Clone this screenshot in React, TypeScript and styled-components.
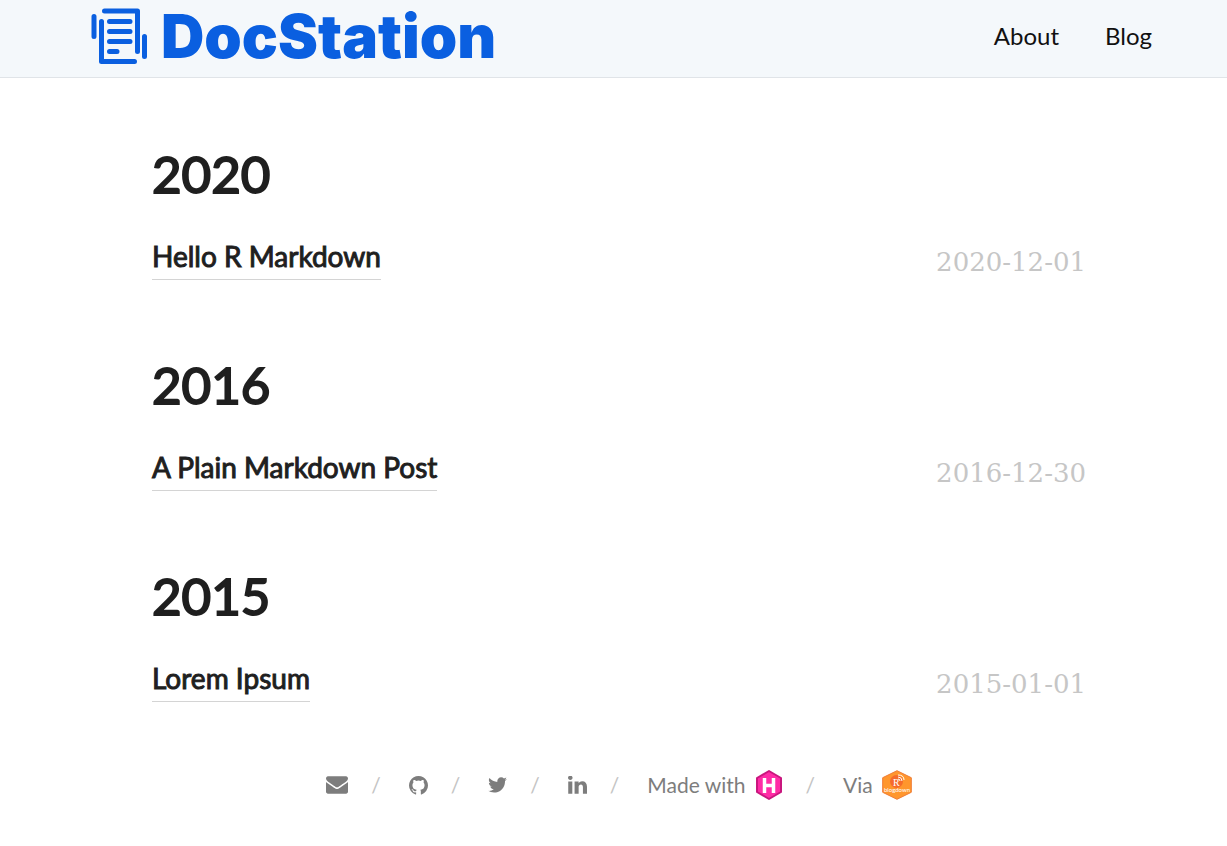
import React from 'react';
import styled, { createGlobalStyle } from 'styled-components';

const GlobalStyle = createGlobalStyle`
  body {
    margin: 0;
    background: #fff;
    color: #1f1f1f;
    font-family: Lato, sans-serif;
  }
`;

const Header = styled.header`
  display: flex;
  align-items: center;
  justify-content: space-between;
  height: 77px;
  padding: 0 75px 0 91px;
  background: #f4f8fb;
  border-bottom: 1px solid #e0e4e8;
`;

const Brand = styled.a`
  display: flex;
  align-items: center;
  gap: 14px;
  padding-bottom: 5px;
  color: #0a5fe0;
  font: 900 60px/72px Inter, sans-serif;
  text-decoration: none;
`;

const Nav = styled.nav`
  display: flex;
  gap: 46px;
  padding-bottom: 6px;
`;

const NavLink = styled.a`
  color: #111;
  font-size: 24px;
  line-height: 36px;
  text-decoration: none;
`;

const Main = styled.main`
  padding: 60px 141px 0 152px;
`;

const YearGroup = styled.section`
  padding-bottom: 69px;

  &:last-child {
    padding-bottom: 64px;
  }
`;

const Year = styled.h1`
  margin: 0 0 28px;
  font-size: 51px;
  font-weight: 400;
  line-height: 72px;
  -webkit-text-stroke: 2px currentColor;
`;

const Post = styled.article`
  display: flex;
  align-items: flex-start;
  justify-content: space-between;
`;

const PostTitle = styled.h2`
  margin: 0;
  font-size: 28px;
  font-weight: 400;
  line-height: 36px;
  -webkit-text-stroke: 1px currentColor;
`;

const PostLink = styled.a`
  display: block;
  padding-bottom: 5px;
  border-bottom: 1px solid #d4d4d4;
  color: inherit;
  text-decoration: none;
`;

const PostDate = styled.time`
  padding-top: 6px;
  color: #c6c6c6;
  font: 26px/36px "DejaVu Serif", serif;
`;

const FooterList = styled.ul`
  display: flex;
  align-items: center;
  justify-content: center;
  margin: 0;
  padding: 0 141px 40px 152px;
  list-style: none;
  font-size: 21px;
  line-height: 38px;
`;

const FooterItem = styled.li`
  display: flex;
  align-items: center;

  & + &::before {
    content: '/';
    margin: 0 28px 0 23px;
    color: #c4c4c4;
  }
`;

const FooterLink = styled.a`
  display: flex;
  align-items: center;
  gap: 9px;
  color: #7d7d7d;
  text-decoration: none;
`;

const Icon = styled.svg`
  display: block;
  fill: currentColor;
`;

const DocumentLogo = () => (
  <svg width="56" height="58" viewBox="0 0 56 58" fill="none" stroke="currentColor" strokeWidth="5" strokeLinecap="round" strokeLinejoin="round" aria-hidden="true">
    <path d="M3 9.500v20M53.500 29.500v20M13.500 4h33v40.500M10.500 14.500v40h33M18.500 14.500h20.500M18.500 24.500h20.500M18.500 34.500h20.500M18.500 44.500h7.500" />
  </svg>
);

const social = [
  {
    label: 'Email', width: 22, box: '0 128 1792 1664',
    path: 'M1792 710v794q0 66-47 113t-113 47h-1472q-66 0-113-47t-47-113v-794q44 49 101 87 362 246 497 345 57 42 92.5 65.5t94.5 48 110 24.5h2q51 0 110-24.5t94.5-48 92.5-65.5q170-123 498-345 57-39 100-87zm0-294q0 79-49 151t-122 123q-376 261-468 325-10 7-42.5 31t-54 38.5-52 32.5-57.5 27-50 9h-2q-23 0-50-9t-57.5-27-52-32.5-54-38.5-42.5-31q-91-64-262-182.5t-205-142.5q-62-42-117-115.5t-55-136.5q0-78 41.5-130t118.5-52h1472q65 0 112.5 47t47.5 113z',
  },
  {
    label: 'GitHub', width: 19, box: '128 128 1536 1536',
    path: 'M896 128q209 0 385.5 103t279.5 279.5 103 385.5q0 251-146.5 451.5t-378.5 277.5q-27 5-40-7t-13-30q0-3 .5-76.5t.5-134.5q0-97-52-142 57-6 102.5-18t94-39 81-66.5 53-105 20.5-150.5q0-119-79-206 37-91-8-204-28-9-81 11t-92 44l-38 24q-93-26-192-26t-192 26q-16-11-42.5-27t-83.5-38.5-85-13.5q-45 113-8 204-79 87-79 206 0 85 20.5 150t52.5 105 80.5 67 94 39 102.5 18q-39 36-49 103-21 10-45 15t-57 5-65.5-21.5-55.5-62.5q-19-32-48.5-52t-49.5-24l-20-3q-21 0-29 4.5t-5 11.5 9 14 13 12l7 5q22 10 43.5 38t31.5 51l10 23q13 38 44 61.5t67 30 69.5 7 55.5-3.5l23-4q0 38 .5 88.5t.5 54.5q0 18-13 30t-40 7q-232-77-378.5-277.5t-146.5-451.5q0-209 103-385.5t279.5-279.5 385.5-103z',
  },
  {
    label: 'Twitter', width: 19, box: '100 150 1590 1590',
    path: 'M1684 408q-67 98-162 167 1 14 1 42 0 130-38 259.5t-115.5 248.5-184.5 210.5-258 146-323 54.5q-271 0-496-145 35 4 78 4 225 0 401-138-105-2-188-64.5t-114-159.5q33 5 61 5 43 0 85-11-112-23-185.5-111.5t-73.5-205.5v-4q68 38 146 41-66-44-105-115t-39-154q0-88 44-163 121 149 294.5 238.5t371.5 99.5q-8-38-8-74 0-134 94.5-228.5t228.5-94.5q140 0 236 102 109-21 205-78-37 115-142 178 93-10 186-50z',
  },
  {
    label: 'LinkedIn', width: 19, box: '128 176 1536 1536',
    path: 'M477 625v991h-330v-991h330zm21-306q1 73-50.5 122t-135.5 49h-2q-82 0-132-49t-50-122q0-74 51.5-122.5t134.5-48.5 133 48.5 51 122.5zm1166 729v568h-329v-530q0-105-40.5-164.5t-126.5-59.5q-63 0-105.5 34.5t-63.5 85.5q-11 30-11 81v553h-329q2-399 2-647t-1-296l-1-48h329v144h-2q20-32 41-56t56.5-52 87-43.5 114.5-15.5q171 0 275 113.5t104 332.5z',
  },
];

const HugoLogo = () => (
  <svg width="28" height="30" viewBox="0 0 28 30" aria-label="Hugo">
    <path d="M14 1 26 8v14l-12 7L2 22V8z" fill="#ff2ba6" stroke="#c9177e" strokeWidth="2" strokeLinejoin="round" />
    <path d="M9.500 8v15M18.500 8v15M9.500 15.500h9" stroke="#fff" strokeWidth="3.5" fill="none" />
  </svg>
);

const BlogdownLogo = () => (
  <svg width="30" height="30" viewBox="0 0 30 30" aria-label="blogdown">
    <path d="M15 .7 29.300 7.700v14.600L15 29.300.7 22.300V7.700z" fill="#ff962d" stroke="#ef7b32" strokeWidth="1" />
    <circle cx="14.500" cy="11.500" r="6.500" fill="#f56b2b" />
    <text x="11" y="16" fill="#fff" fontFamily="Liberation Serif, serif" fontSize="10">R</text>
    <path d="M16 9q2 0 2 2M16 7q4 0 4 4M16 5q6 0 6 5" stroke="#fff" fill="none" />
    <text x="15" y="22" textAnchor="middle" fill="#fff" fontFamily="Lato, sans-serif" fontSize="6">blogdown</text>
  </svg>
);

const posts = [
  { year: '2020', title: 'Hello R Markdown', date: '2020-12-01' },
  { year: '2016', title: 'A Plain Markdown Post', date: '2016-12-30' },
  { year: '2015', title: 'Lorem Ipsum', date: '2015-01-01' },
];

export default function App() {
  return (
    <>
      <GlobalStyle />
      <Header>
        <Brand href="#">
          <DocumentLogo />
          DocStation
        </Brand>
        <Nav>
          <NavLink href="#about">About</NavLink>
          <NavLink href="#blog">Blog</NavLink>
        </Nav>
      </Header>
      <Main>
        {posts.map((post) => (
          <YearGroup key={post.year}>
            <Year>{post.year}</Year>
            <Post>
              <PostTitle>
                <PostLink href="#post">{post.title}</PostLink>
              </PostTitle>
              <PostDate dateTime={post.date}>{post.date}</PostDate>
            </Post>
          </YearGroup>
        ))}
      </Main>
      <footer>
        <FooterList>
          {social.map((item) => (
            <FooterItem key={item.label}>
              <FooterLink href="#social" aria-label={item.label}>
                <Icon width={item.width} height={item.width} viewBox={item.box}>
                  <path d={item.path} />
                </Icon>
              </FooterLink>
            </FooterItem>
          ))}
          <FooterItem>
            <FooterLink href="#hugo">Made with <HugoLogo /></FooterLink>
          </FooterItem>
          <FooterItem>
            <FooterLink href="#blogdown">Via <BlogdownLogo /></FooterLink>
          </FooterItem>
        </FooterList>
      </footer>
    </>
  );
}
